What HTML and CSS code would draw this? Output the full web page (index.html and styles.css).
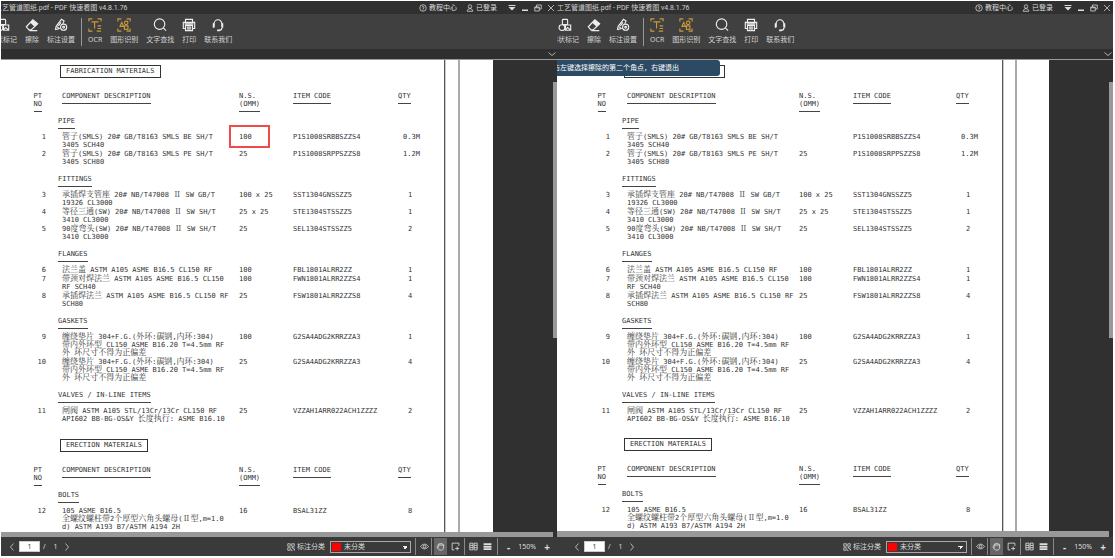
FILE: index.html
```html
<!DOCTYPE html>
<html lang="zh-CN">
<head>
<meta charset="utf-8">
<title>PDF 快速看图</title>
<link rel="stylesheet" href="styles.css">
</head>
<body>
<svg class="sprite" aria-hidden="true">
  <symbol id="i-shape" viewBox="0 0 16 16"><rect x="5" y="1.500" width="6" height="6" rx="1"/><circle cx="4.500" cy="11" r="3.300"/><path d="M8.500 8h6v6h-6zM9 13l2-2 3 2.500"/></symbol>
  <symbol id="i-erase" viewBox="0 0 16 16"><path d="M1.500 10 9 2l5.500 4.500L7 13.500H4.500zM5 14.500h9"/><path class="solid" d="M6 5.500 9 2l5.500 4.500-3.500 3.500z"/></symbol>
  <symbol id="i-note" viewBox="0 0 16 16"><path d="m1.500 13.500 1-4 6-8 3 2-1.500 3M3.500 10l2.500 2-4.500 1.500M5 9l3-4"/><circle cx="11" cy="10.500" r="3.500"/><circle cx="11" cy="10.500" r="1"/></symbol>
  <symbol id="i-ocr" viewBox="0 0 16 16"><path d="M1 4V1h4M11 1h4v3M1 12v3h4M4 4.500h8M7.500 4.500V12M11 9h4M11 12h4M10 15h5"/></symbol>
  <symbol id="i-detect" viewBox="0 0 16 16"><path d="M1 4V1h4M11 1h4v3M1 12v3h4M15 12v3h-4M3.500 9.500 5.500 5l2 4.500z"/><circle cx="10.500" cy="5.500" r="2"/><rect x="8.500" y="9" width="4" height="4"/></symbol>
  <symbol id="i-search" viewBox="0 0 16 16"><circle cx="7.500" cy="7" r="6"/><path d="m12 11.500 3 3"/></symbol>
  <symbol id="i-print" viewBox="0 0 16 16"><path d="M4 4.500V1.500h8v3M4 12H1.500V5h13v7H12M4 8.500h8v6H4zM5.500 10.500h5M5.500 12.500h5M3 6.700h10"/></symbol>
  <symbol id="i-help" viewBox="0 0 16 16"><path d="M3.500 10V7a4.500 5 0 0 1 9 0v3M12.500 11c0 2-1 3-3.500 3"/><path class="solid" d="M2 6h2v5H2zM12 6h2v5h-2zM7 13h3v2H7z"/></symbol>
  <symbol id="i-question" viewBox="0 0 16 16"><circle cx="8" cy="8" r="6.500"/><path d="M6 6.500a2 2 0 1 1 2 2.500v1M8 11v1.500"/></symbol>
  <symbol id="i-user" viewBox="0 0 16 16"><circle cx="8" cy="5" r="3.500"/><path d="M2.500 14.500c0-7 11-7 11 0z"/></symbol>
  <symbol id="i-menu" viewBox="0 0 16 16"><path class="solid" d="M1 2h14v2H1zM1 6h14l-7 7z"/></symbol>
  <symbol id="i-min" viewBox="0 0 16 16"><path class="solid" d="M2 11h12v3H2z"/></symbol>
  <symbol id="i-restore" viewBox="0 0 16 16"><path d="M1.500 6h9v8h-9zM5 6V2h9.500v8h-4M1.500 7.500h9"/></symbol>
  <symbol id="i-close" viewBox="0 0 16 16"><path d="m2 2 12 12M14 2 2 14"/></symbol>
  <symbol id="i-down" viewBox="0 0 16 16"><path d="m1 5 7 6 7-6"/></symbol>
  <symbol id="i-prev" viewBox="0 0 16 16"><path d="M11 1 5 8l6 7"/></symbol>
  <symbol id="i-next" viewBox="0 0 16 16"><path d="m5 1 6 7-6 7"/></symbol>
  <symbol id="i-class" viewBox="0 0 16 16"><path d="M1.500 1.500h5v5h-5zM9.500 1.500h5v5h-5zM1.500 9.500h5v5h-5zM9 9h3v3h3v3M9 13v2h2M14 9h1"/></symbol>
  <symbol id="i-eye" viewBox="0 0 16 16"><path d="M1 8c4-5.500 10-5.500 14 0-4 5.500-10 5.500-14 0z"/><circle cx="8" cy="8" r="2.500"/></symbol>
  <symbol id="i-hand" viewBox="0 0 16 16"><path d="M4 8V4.500c0-1.500 2-1.500 2-.5 0-2 2.500-2 2.500-.2 0-1.500 2.500-1.500 2.500.4 0-1 2.500-1 2.500.8v4c0 4-2 5.500-5 5.500-4 0-6-3-6.500-6C2 7 3.500 7 4 8l1 2M4 5.500h9"/></symbol>
  <symbol id="i-select" viewBox="0 0 16 16"><path d="M6 14H2V2h12v5M11 8v7M7.500 11.500h7"/></symbol>
  <symbol id="i-grid" viewBox="0 0 16 16"><path d="M1.500 2h5.500v12H1.500zM9 2h5.500v12H9zM1.500 6H7M1.500 10H7M9 6h5.500M9 10h5.500"/></symbol>
  <symbol id="i-rows" viewBox="0 0 16 16"><path class="solid" d="M1 2h14v3.500H1zM1 6.500h14V10H1zM1 11h14v3H1z"/></symbol>
</svg>

<main class="desktop" id="desktop"></main>

<template id="viewer">
  <section class="viewer">
    <header class="titlebar">
      <div class="title">工艺管道图纸.pdf - PDF 快速看图 v4.8.1.76</div>
      <a class="title-link" href="#"><svg class="icon icon-s"><use href="#i-question"/></svg>教程中心</a>
      <a class="title-link user" href="#"><svg class="icon icon-s"><use href="#i-user"/></svg>已登录</a>
      <div class="window-buttons">
        <button aria-label="菜单"><svg class="icon icon-s"><use href="#i-menu"/></svg></button>
        <button aria-label="最小化"><svg class="icon icon-s"><use href="#i-min"/></svg></button>
        <button aria-label="还原"><svg class="icon icon-s"><use href="#i-restore"/></svg></button>
        <button aria-label="关闭"><svg class="icon icon-s"><use href="#i-close"/></svg></button>
      </div>
    </header>
    <nav class="toolbar">
      <button class="tool"><svg class="icon icon-l"><use href="#i-shape"/></svg>形状标记</button>
      <button class="tool"><svg class="icon icon-l"><use href="#i-erase"/></svg>擦除</button>
      <button class="tool"><svg class="icon icon-l"><use href="#i-note"/></svg>标注设置</button>
      <span class="tool-divider"></span>
      <button class="tool gold"><svg class="icon icon-l"><use href="#i-ocr"/></svg>OCR</button>
      <button class="tool gold"><svg class="icon icon-l"><use href="#i-detect"/></svg>图形识别</button>
      <button class="tool"><svg class="icon icon-l"><use href="#i-search"/></svg>文字查找</button>
      <button class="tool"><svg class="icon icon-l"><use href="#i-print"/></svg>打印</button>
      <button class="tool"><svg class="icon icon-l"><use href="#i-help"/></svg>联系我们</button>
    </nav>
    <div class="tabstrip"><button aria-label="展开"><svg class="icon icon-s"><use href="#i-down"/></svg></button></div>

    <div class="workspace">
      <article class="page">
        <table class="materials">
          <caption><span>FABRICATION MATERIALS</span></caption>
          <colgroup><col class="c-no"><col class="c-desc"><col class="c-size"><col class="c-code"><col></colgroup>
          <thead><tr><th><span>PT<br>NO</span></th><th><span>COMPONENT DESCRIPTION</span></th><th><span>N.S.<br>(OMM)</span></th><th><span>ITEM CODE</span></th><th><span>QTY</span></th></tr></thead>
          <tbody>
            <tr class="group"><td></td><th colspan="4"><span>PIPE</span></th></tr>
            <tr><td>1</td><td><i>管子</i>(SMLS) 20# GB/T8163 SMLS BE SH/T<br>3405 SCH40</td><td class="marked"><b>100</b></td><td>P1S1008SRBBSZZS4</td><td>0.3M</td></tr>
            <tr><td>2</td><td><i>管子</i>(SMLS) 20# GB/T8163 SMLS PE SH/T<br>3405 SCH80</td><td>25</td><td>P1S1008SRPPSZZS8</td><td>1.2M</td></tr>
          </tbody>
          <tbody>
            <tr class="group"><td></td><th colspan="4"><span>FITTINGS</span></th></tr>
            <tr><td>3</td><td><i>承插焊支管座</i> 20# NB/T47008 <i>Ⅱ</i> SW GB/T<br>19326 CL3000</td><td>100 x 25</td><td>SST1304GNSSZZ5</td><td class="count">1</td></tr>
            <tr><td>4</td><td><i>等径三通</i>(SW) 20# NB/T47008 <i>Ⅱ</i> SW SH/T<br>3410 CL3000</td><td>25 x 25</td><td>STE1304STSSZZ5</td><td class="count">1</td></tr>
            <tr><td>5</td><td>90<i>度弯头</i>(SW) 20# NB/T47008 <i>Ⅱ</i> SW SH/T<br>3410 CL3000</td><td>25</td><td>SEL1304STSSZZ5</td><td class="count">2</td></tr>
          </tbody>
          <tbody>
            <tr class="group"><td></td><th colspan="4"><span>FLANGES</span></th></tr>
            <tr><td>6</td><td><i>法兰盖</i> ASTM A105 ASME B16.5 CL150 RF</td><td>100</td><td>FBL1801ALRR2ZZ</td><td class="count">1</td></tr>
            <tr><td>7</td><td><i>带颈对焊法兰</i> ASTM A105 ASME B16.5 CL150<br>RF SCH40</td><td>100</td><td>FWN1801ALRR2ZZS4</td><td class="count">1</td></tr>
            <tr><td>8</td><td><i>承插焊法兰</i> ASTM A105 ASME B16.5 CL150 RF<br>SCH80</td><td>25</td><td>FSW1801ALRR2ZZS8</td><td class="count">4</td></tr>
          </tbody>
          <tbody>
            <tr class="group"><td></td><th colspan="4"><span>GASKETS</span></th></tr>
            <tr><td>9</td><td><i>缠绕垫片</i> 304+F.G.(<i>外环</i>:<i>碳钢</i>,<i>内环</i>:304)<br><i>带内外环型</i> CL150 ASME B16.20 T=4.5mm RF<br><i>外</i> <i>环尺寸不得为正偏差</i></td><td>100</td><td>G2SA4ADG2KRRZZA3</td><td class="count">1</td></tr>
            <tr><td>10</td><td><i>缠绕垫片</i> 304+F.G.(<i>外环</i>:<i>碳钢</i>,<i>内环</i>:304)<br><i>带内外环型</i> CL150 ASME B16.20 T=4.5mm RF<br><i>外</i> <i>环尺寸不得为正偏差</i></td><td>25</td><td>G2SA4ADG2KRRZZA3</td><td class="count">4</td></tr>
          </tbody>
          <tbody>
            <tr class="group"><td></td><th colspan="4"><span>VALVES / IN-LINE ITEMS</span></th></tr>
            <tr><td>11</td><td><i>闸阀</i> ASTM A105 STL/13Cr/13Cr CL150 RF<br>API602 BB-BG-OS&amp;Y <i>长度执行</i>: ASME B16.10</td><td>25</td><td>VZZAH1ARR022ACH1ZZZZ</td><td class="count">2</td></tr>
          </tbody>
        </table>
        <table class="materials erection">
          <caption><span>ERECTION MATERIALS</span></caption>
          <colgroup><col class="c-no"><col class="c-desc"><col class="c-size"><col class="c-code"><col></colgroup>
          <thead><tr><th><span>PT<br>NO</span></th><th><span>COMPONENT DESCRIPTION</span></th><th><span>N.S.<br>(OMM)</span></th><th><span>ITEM CODE</span></th><th><span>QTY</span></th></tr></thead>
          <tbody>
            <tr class="group"><td></td><th colspan="4"><span>BOLTS</span></th></tr>
            <tr><td>12</td><td>105 ASME B16.5<br><i>全螺纹螺柱带</i>2<i>个厚型六角头螺母</i>(<i>Ⅱ型</i>,m=1.0<br>d) ASTM A193 B7/ASTM A194 2H</td><td>16</td><td>BSAL31ZZ</td><td class="count">8</td></tr>
          </tbody>
        </table>
      </article>
      <div class="scroll-y"></div>
      <div class="hint">击左键选择擦除的第二个角点，右键退出</div>
    </div>
    <div class="scroll-x"></div>

    <footer class="statusbar">
      <div class="pager">
        <button aria-label="上一页"><svg class="icon icon-s"><use href="#i-prev"/></svg></button>
        <input type="text" value="1" aria-label="页码">
        <span>/</span><span class="total">1</span>
        <button aria-label="下一页"><svg class="icon icon-s"><use href="#i-next"/></svg></button>
      </div>
      <label class="category"><svg class="icon icon-s"><use href="#i-class"/></svg>标注分类
        <span class="select-box"><span class="swatch"></span><select><option>未分类</option></select></span>
      </label>
      <div class="cell"><button aria-label="显示标注"><svg class="icon icon-m"><use href="#i-eye"/></svg></button></div>
      <div class="cell modes"><button class="active" aria-label="手型"><svg class="icon icon-m"><use href="#i-hand"/></svg></button><button aria-label="选择"><svg class="icon icon-m"><use href="#i-select"/></svg></button></div>
      <div class="cell modes"><button aria-label="双页"><svg class="icon icon-m"><use href="#i-grid"/></svg></button><button aria-label="连续"><svg class="icon icon-m"><use href="#i-rows"/></svg></button></div>
      <div class="zoom"><button>-</button><span>150%</span><button>+</button></div>
    </footer>
  </section>
</template>
<script src="app.js"></script>
</body>
</html>
```
FILE: app.js
```js
const desktop = document.getElementById("desktop");
const template = document.getElementById("viewer");

["before", "after"].forEach((state) => {
  const copy = template.content.cloneNode(true);
  copy.querySelector(".viewer").classList.add(state);
  if (state === "before") {
    copy.querySelector(".hint").remove();
  } else {
    copy.querySelector(".marked").textContent = "";
  }
  desktop.append(copy);
});
```
FILE: styles.css
```css
* { box-sizing: border-box; }

body {
  margin: 0;
  background: #fff;
  font: 7px/10px "Noto Sans", "Noto Sans CJK SC", sans-serif;
  color: #ddd;
}

button, input, select { font: inherit; color: inherit; }

button {
  display: flex;
  align-items: center;
  justify-content: center;
  padding: 0;
  border: 0;
  background: none;
}

.sprite { position: absolute; width: 0; height: 0; }

.icon { flex: none; fill: none; stroke: currentColor; stroke-width: 1.5; overflow: visible; }
.solid { fill: currentColor; stroke: none; }
.icon-s { width: 8px; height: 8px; }
.icon-m { width: 9px; height: 9px; }
.icon-l { width: 14px; height: 14px; stroke-width: 1.3; }

.desktop {
  display: flex;
  height: 100vh;
  padding: 1px 2px 2px 1px;
}

.viewer {
  --shift: -6px;
  --no-width: 57px;
  --desc-width: 181px;
  --code-width: 105px;
  --indent: 4px;
  --erection-gap: 15px;
  --pager-start: 7px;
  --frame-a: 443px;
  --frame-b: 457px;
  flex: 1 1 0;
  min-width: 0;
  display: flex;
  flex-direction: column;
  overflow: hidden;
  background: #303030;
}

.viewer.after {
  --shift: 0px;
  --no-width: 65px;
  --desc-width: 177px;
  --code-width: 103px;
  --indent: 5px;
  --erection-gap: 14px;
  --pager-start: 16px;
  --frame-a: 445px;
  --frame-b: 458px;
}

.titlebar {
  flex: none;
  display: flex;
  align-items: center;
  height: 13px;
  padding-right: 2px;
  background: #303030;
  white-space: nowrap;
}
.title {
  flex: 1;
  margin-left: var(--shift);
  color: #d0d0d0;
  font-family: Roboto, "Noto Sans CJK SC", sans-serif;
}
.title-link {
  display: flex;
  align-items: center;
  gap: 2px;
  color: #ddd;
  text-decoration: none;
}
.title-link.user { margin: 0 11px 0 9px; }
.window-buttons { display: flex; gap: 5px; }

.toolbar {
  flex: none;
  display: flex;
  align-items: center;
  gap: 8px;
  height: 35px;
  background: #404040;
}
.toolbar .tool:first-child { margin-left: calc(var(--shift) - 6px); }
.tool { flex: none; flex-direction: column; gap: 3px; white-space: nowrap; color: #d4d4d4; }
.tool .icon { color: #eee; }
.tool.gold .icon { color: #c79a3c; }
.tool-divider { flex: none; width: 1px; height: 28px; margin: 0 -2px; background: #999; }

.tabstrip {
  flex: none;
  display: flex;
  justify-content: flex-end;
  height: 11px;
  padding-right: 1px;
  border-bottom: 1px solid #999;
  background: #2f2f2f;
}

.workspace {
  position: relative;
  flex: 1;
  min-height: 0;
  display: flex;
  justify-content: space-between;
  overflow: hidden;
}

.page {
  flex: none;
  width: 88.5%;
  height: 100%;
  overflow: hidden;
  background:
    linear-gradient(to right, #555 50%, #ccc 50%) var(--frame-a) 0 / 2px 100% no-repeat,
    linear-gradient(#aaa, #aaa) var(--frame-b) 0 / 2px 100% no-repeat,
    #fff;
  color: #333;
}

.scroll-y { flex: none; width: 4px; height: 256px; margin-top: 22px; background: #999; }
.scroll-x { flex: none; height: 5px; margin-right: 4px; background: #999; }
.after .scroll-x { height: 6px; }

.hint {
  position: absolute;
  top: 0;
  left: 0;
  display: flex;
  justify-content: flex-end;
  width: 163px;
  padding: 3px 41px 3px 0;
  border-radius: 0 3px 3px 0;
  background: #2c4a63;
  color: #fff;
  white-space: nowrap;
}

.materials {
  width: 100%;
  table-layout: fixed;
  border-collapse: collapse;
  font: 7px/8px "DejaVu Sans Mono", "Noto Sans CJK SC", monospace;
  white-space: nowrap;
}
.materials i { font: 8px/0 "Noto Serif CJK SC", "Noto Sans CJK SC", sans-serif; }
.materials b { font-weight: normal; }
.c-no { width: var(--no-width); }
.c-desc { width: var(--desc-width); }
.c-size { width: 54px; }
.c-code { width: var(--code-width); }

.materials caption { padding: 5px 0 14px calc(var(--no-width) + 2px); text-align: left; }
.materials caption span {
  display: block;
  width: fit-content;
  padding: 0 5px;
  border: 1px solid #333;
  line-height: 11px;
}
.materials.erection caption { padding-top: var(--erection-gap); }

.materials th, .materials td {
  padding: 0 0 1px;
  text-align: left;
  vertical-align: top;
  font-weight: normal;
}
.materials th { padding: 0; }
.materials th span {
  display: block;
  width: fit-content;
  padding-bottom: 3px;
  border-bottom: 1px solid #444;
}
.materials th:first-child span { margin-left: auto; margin-right: 16px; }
.materials thead th:nth-child(2), .materials td:nth-child(2) { padding-left: var(--indent); }
.materials td:first-child { padding-right: 12px; text-align: right; }
.materials td:last-child { padding-left: 5px; }
.materials td.count { padding-left: 10px; }
.materials .group th { padding: 8px 0 4px; }
.materials thead + tbody .group th { padding-top: 5px; }

.marked { position: relative; }
.marked b::after {
  content: "";
  box-sizing: border-box;
  position: absolute;
  top: -8px;
  left: -10px;
  width: 41px;
  height: 23px;
  border: 2px solid #f04a4a;
}

.statusbar {
  flex: none;
  display: flex;
  align-items: center;
  height: 19px;
  padding-right: 4px;
  background: #3a3a3a;
  white-space: nowrap;
}
.pager { flex: 1; display: flex; align-items: center; gap: 3px; padding-left: var(--pager-start); }
.pager input {
  width: 21px;
  height: 11px;
  padding: 0;
  border: 1px solid #ccc;
  background: #fff;
  color: #444;
  text-align: center;
}
.pager .total { margin: 0 2px 0 5px; }

.category { display: flex; align-items: center; gap: 2px; margin-right: 4px; }
.select-box {
  display: flex;
  align-items: center;
  width: 81px;
  height: 12px;
  margin-left: 3px;
  border: 1px solid #aaa;
}
.swatch { width: 9px; height: 8px; margin: 0 3px 0 1px; background: #f00; }
.select-box select {
  flex: 1;
  min-width: 0;
  height: 10px;
  padding: 0;
  border: 0;
  appearance: none;
  color: #ddd;
  background:
    linear-gradient(to bottom left, #eee 50%, transparent 50%) right 5px top 4px / 3px 3px no-repeat,
    linear-gradient(to bottom right, #eee 50%, transparent 50%) right 2px top 4px / 3px 3px no-repeat;
}

.cell {
  display: flex;
  align-items: center;
  height: 17px;
  padding: 0 1px 0 2px;
  border-left: 1px solid #888;
}
.cell button { width: 12px; height: 17px; }
.cell.modes { gap: 2px; width: 33px; }
.cell .active { width: 13px; background: #666; }

.zoom {
  display: flex;
  align-items: center;
  justify-content: space-between;
  width: 56px;
  height: 17px;
  padding: 0 3px 0 9px;
  border-left: 1px solid #888;
}
.zoom button { font-size: 10px; font-weight: bold; }
```
